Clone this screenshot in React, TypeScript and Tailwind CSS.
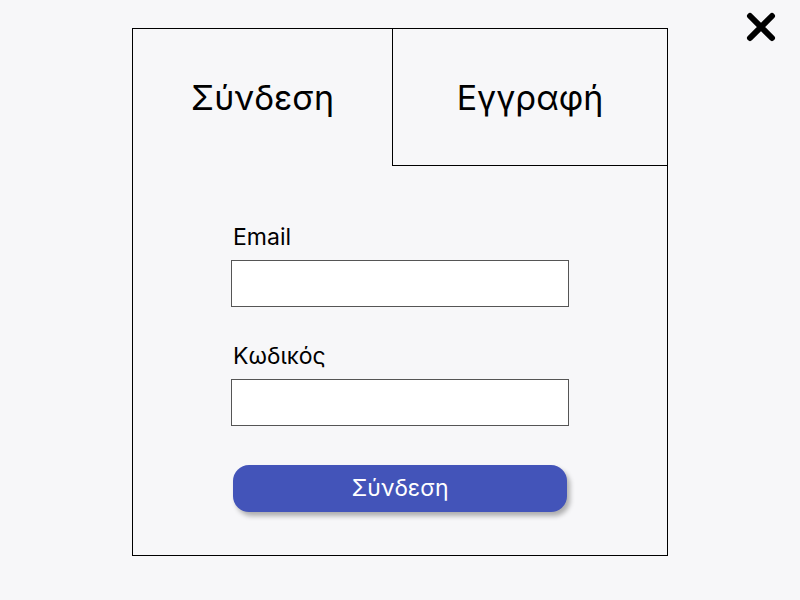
import React from 'react'

const Field = ({ label, type }: { label: string; type: string }) => (
  <div className="flex flex-col">
    <label className="text-[23px] leading-[28px] text-black pl-[2px]">{label}</label>
    <input type={type} className="mt-[9px] w-[338px] h-[47px] bg-white border border-[#555] outline-none" />
  </div>
)

const App = () => {
  return (
    <div className="w-[800px] h-[600px] bg-[#f7f7f9] relative font-['Inter']">
      <button className="absolute left-[745px] top-[12px] w-[32px] h-[32px]">
        <svg viewBox="0 0 32 32" width="32" height="32">
          <path d="M5 4 L27 26 M27 4 L5 26" stroke="black" strokeWidth="6" strokeLinecap="round" />
        </svg>
      </button>

      <div className="absolute left-[132px] top-[28px] w-[536px] h-[528px] border border-black flex flex-col">
        <div className="flex h-[137px]">
          <div className="w-[259px] flex items-center justify-center text-[34px] text-black">
            Σύνδεση
          </div>
          <div className="flex-1 border-l border-b border-black flex items-center justify-center text-[34px] text-black">
            Εγγραφή
          </div>
        </div>

        <div className="flex flex-col items-center pt-[57px]">
          <Field label="Email" type="email" />
          <div className="h-[35px]" />
          <Field label="Κωδικός" type="password" />
          <button className="mt-[39px] w-[334px] h-[47px] rounded-[16px] bg-[#4354b9] text-white text-[23px] shadow-[3px_4px_5px_rgba(0,0,0,0.3)]">
            Σύνδεση
          </button>
        </div>
      </div>
    </div>
  )
}

export default App
